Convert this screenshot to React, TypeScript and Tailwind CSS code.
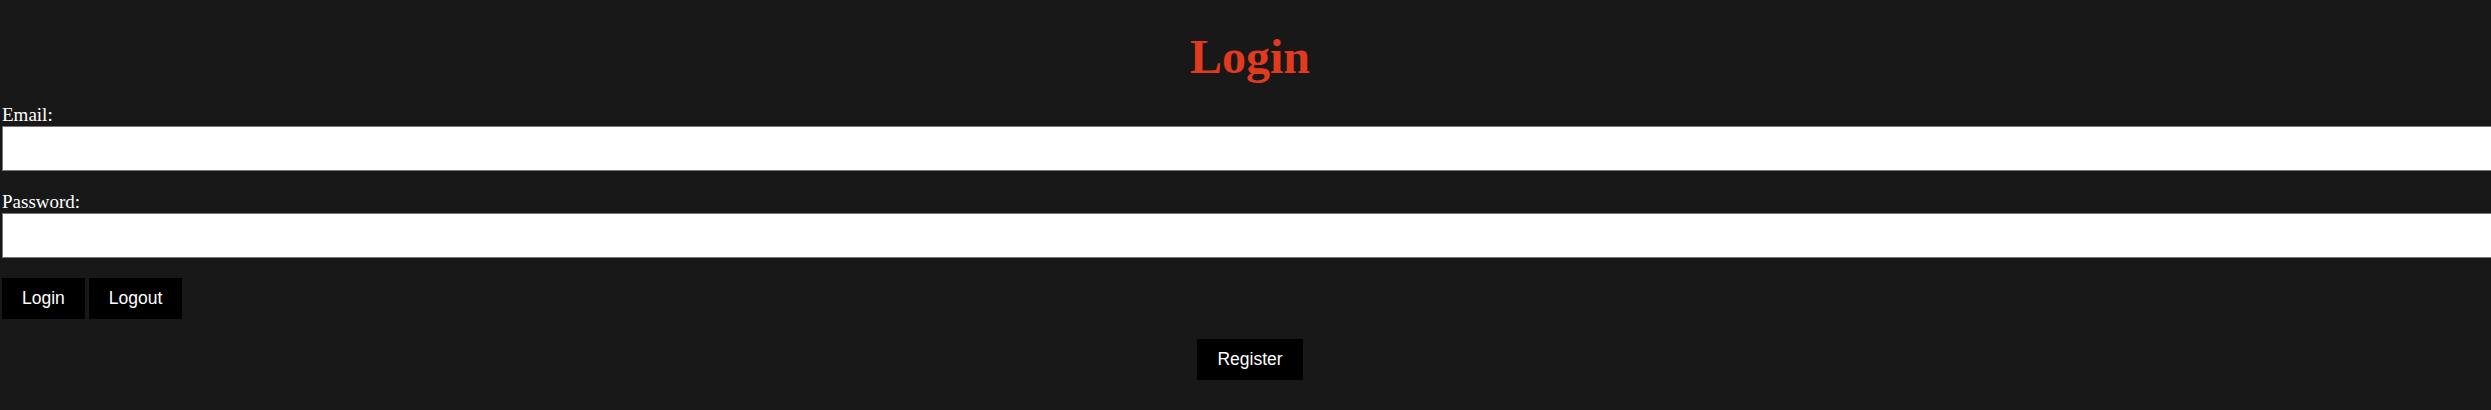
import React from "react";

export default function App() {
  return (
    <div className="min-h-[410px] w-full overflow-hidden bg-[#181818]">
      <div className="w-[2496px] ml-[2px]">
        <h1 className="mt-[33px] text-center text-[48px] leading-[48px] font-bold text-[#e23a1e] font-['Liberation_Serif',serif]">
          Login
        </h1>
        <form className="mt-[23px] flex flex-col" onSubmit={(e) => e.preventDefault()}>
          <label className="block text-[19px] leading-[22px] text-white font-['Liberation_Serif',serif]">
            Email:
          </label>
          <input
            type="email"
            className="block h-[45px] w-[2520px] border border-[#767676] bg-white outline-none"
          />
          <label className="mt-[20px] block text-[19px] leading-[22px] text-white font-['Liberation_Serif',serif]">
            Password:
          </label>
          <input
            type="password"
            className="block h-[45px] w-[2520px] border border-[#767676] bg-white outline-none"
          />
          <div className="mt-[20px] flex gap-[4px]">
            <button
              type="submit"
              className="h-[41px] bg-black px-5 text-[17.5px] leading-[21px] text-white font-['Liberation_Sans',Arial,sans-serif]"
            >
              Login
            </button>
            <button
              type="button"
              className="h-[41px] bg-black px-5 text-[17.5px] leading-[21px] text-white font-['Liberation_Sans',Arial,sans-serif]"
            >
              Logout
            </button>
          </div>
        </form>
        <div className="mt-[20px] flex justify-center">
          <button
            type="button"
            className="h-[41px] bg-black px-5 text-[17.5px] leading-[21px] text-white font-['Liberation_Sans',Arial,sans-serif]"
          >
            Register
          </button>
        </div>
      </div>
    </div>
  );
}
